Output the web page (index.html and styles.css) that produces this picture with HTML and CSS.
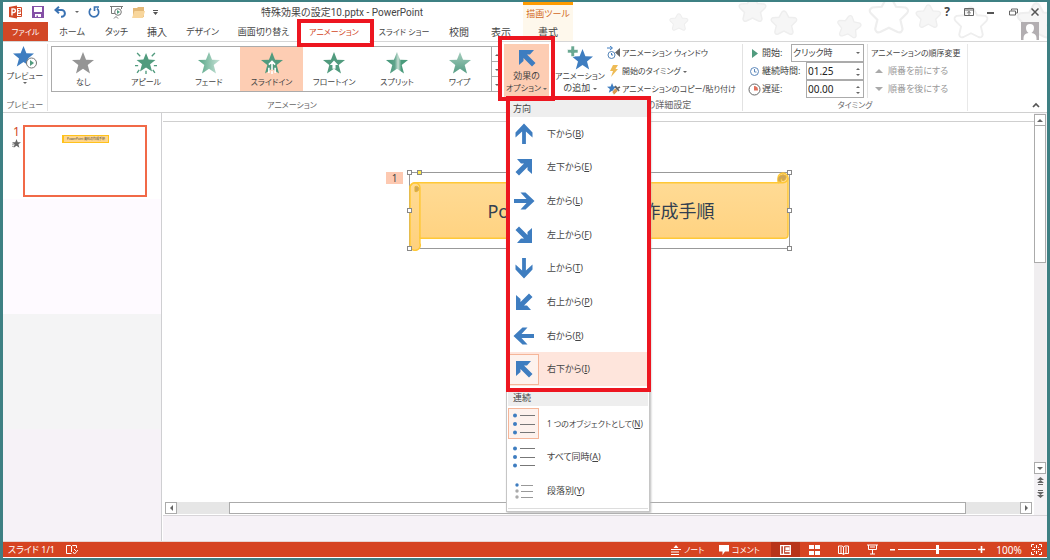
FILE: index.html
```html
<!DOCTYPE html>
<html lang="ja">
<head>
<meta charset="utf-8">
<title>特殊効果の設定10.pptx - PowerPoint</title>
<link rel="stylesheet" href="styles.css">
</head>
<body>
<svg class="defs" aria-hidden="true">
  <defs>
    <path id="star" d="M10.500 0L13.400 7.300L21 7.600L15 12.500L17.200 20.500L10.500 16L3.800 20.500L6 12.500L0 7.600L7.600 7.300Z"/>
    <path id="blob" d="M25 4Q29 0 33 4L39 15L52 16Q58 19 54 24L45 33L48 46Q47 52 41 50L29 44L17 50Q11 52 10 46L13 33L4 24Q0 19 6 16L19 15Z"/>
    <path id="arrow" d="M12 1.500L20.500 10.500V15.500L13.900 9.500V22H10.100V9.500L3.500 15.500V10.500Z"/>
    <path id="diag" d="M4 4H19L15 8.500H12L20.500 17L17 20.500L8.500 12V15L4 19Z"/>
    <linearGradient id="fade"><stop offset="0" stop-color="#55a585"/><stop offset="1" stop-color="#c9e3d8"/></linearGradient>
    <linearGradient id="split"><stop offset="0" stop-color="#3f9476"/><stop offset=".4" stop-color="#5fa48b"/><stop offset=".55" stop-color="#c5ddd3"/><stop offset=".7" stop-color="#4a9b7c"/><stop offset="1" stop-color="#4a9b7c"/></linearGradient>
    <linearGradient id="wipe" x2="0" y2="1"><stop offset="0" stop-color="#a5cdbd"/><stop offset="1" stop-color="#559d84"/></linearGradient>
    <linearGradient id="gold" x2="0" y2="1"><stop offset="0" stop-color="#ffdc98"/><stop offset="1" stop-color="#ffd17d"/></linearGradient>
  </defs>
</svg>
<div class="app">
  <header class="header">
    <svg class="stars" width="420" height="38" viewBox="0 0 420 38" fill="#f6f6f6" stroke="#eee" stroke-width="3">
      <use href="#blob" transform="translate(42 11) scale(.34)"/>
      <use href="#blob" transform="translate(111 -6) scale(.5)"/>
      <use href="#blob" transform="translate(143 8) scale(.48)"/>
      <use href="#blob" transform="translate(211 11) rotate(8) scale(.44)"/>
      <use href="#blob" transform="translate(241 -6) scale(.72)" fill="#fff"/>
      <use href="#blob" transform="translate(288 2) scale(.46)"/>
      <use href="#blob" transform="translate(326 4) scale(.62)" fill="#fff"/>
      <use href="#blob" transform="translate(389 0) scale(.7)"/>
    </svg>
    <div class="titlebar">
      <div class="qat">
        <span class="slot"><svg width="14" height="14" viewBox="0 0 14 14"><path fill="#fff" stroke="#d24726" d="M7 2.500h5.500v9H7z"/><path fill="#d24726" d="M0 2L8 .5v13L0 12z"/><path fill="none" stroke="#fff" stroke-width="1.400" d="M3 10.500V4h1.700a1.700 1.700 0 010 3.500H3"/><path fill="none" stroke="#d24726" d="M9 4.500h2v2.500H9M9 9.500h3"/></svg></span>
        <button class="slot" aria-label="保存"><svg width="12" height="12" viewBox="0 0 12 12"><path fill="#8450a6" d="M0 0h12v12H0z"/><path fill="#fff" d="M2 1h8v5H2zM3 8h6v3H6V9.500H4.500V11H3z"/></svg></button>
        <button class="slot" aria-label="元に戻す"><svg width="13" height="12" viewBox="0 0 13 12" fill="none" stroke="#3a72b3" stroke-width="2"><path d="M5 .8L1.500 4 5 7.200M2 4h5.500a3.200 3.200 0 010 6.800H7"/></svg></button>
        <button class="slot tiny" aria-label="元に戻すの一覧"><i class="caret"></i></button>
        <button class="slot" aria-label="やり直し"><svg width="12" height="12" viewBox="0 0 12 12" fill="none" stroke="#3a72b3" stroke-width="1.700"><path d="M3 2.500A4.700 4.700 0 109 2.500M6.500 5V1H11"/></svg></button>
        <button class="slot" aria-label="先頭から開始"><svg width="13" height="13" viewBox="0 0 13 13" fill="none" stroke="#777"><path d="M0 .5h13M1.500 1v6.500H5M11.500 1v2M4 12.500l2-2 2 2"/><circle cx="8" cy="6" r="3.300" fill="#fff"/><path fill="#519b7e" stroke="none" d="M7 4l3 2-3 2z"/></svg></button>
        <button class="slot" aria-label="開く"><svg width="13" height="11" viewBox="0 0 13 11"><path fill="#e3b877" d="M1 1h4l1-1h6v10H1z"/><path fill="#f8d69c" d="M2.500 4H13l-2 7H0z"/></svg></button>
        <button class="slot tiny" aria-label="カスタマイズ"><svg width="5" height="5" viewBox="0 0 5 5"><path fill="#555" d="M0 0h5v1H0zM0 2h5L2.500 5z"/></svg></button>
      </div>
      <h1 class="title">特殊効果の設定10.pptx - PowerPoint</h1>
      <div class="context-title">描画ツール</div>
      <div class="window-controls">
        <button class="help" aria-label="ヘルプ">?</button>
        <button aria-label="リボンの表示オプション"><svg width="10" height="8" viewBox="0 0 10 8" fill="none" stroke="#666"><path d="M.5.500h9v7h-9zM1 2h8M5 7V3.500M3.300 5L5 3.500 6.700 5"/></svg></button>
        <button aria-label="最小化"><svg width="8" height="8" viewBox="0 0 8 8"><path fill="#555" d="M0 4h7v2H0z"/></svg></button>
        <button aria-label="元のサイズに戻す"><svg width="9" height="8" viewBox="0 0 9 8" fill="none" stroke="#666"><path d="M2.500 2.500V1h6v4h-2M.5 3h6v4h-6z"/></svg></button>
        <button aria-label="閉じる"><svg width="8" height="8" viewBox="0 0 8 8" stroke="#555" stroke-width="1.500"><path d="M.5.500l7 7M7.500.500l-7 7"/></svg></button>
      </div>
    </div>
    <nav class="tabs">
      <button class="tab file">ファイル</button>
      <button class="tab home">ホーム</button>
      <button class="tab">タッチ</button>
      <button class="tab kanji">挿入</button>
      <button class="tab design">デザイン</button>
      <button class="tab wide switch">画面切り替え</button>
      <button class="tab wide active">アニメーション<span class="mark mark-tab"></span></button>
      <button class="tab wide">スライド ショー</button>
      <button class="tab kanji">校閲</button>
      <button class="tab kanji display">表示</button>
      <button class="tab kanji context">書式</button>
      <svg class="avatar" width="18" height="18" viewBox="0 0 18 18"><path fill="#b2aeb1" d="M0 0h18v18H0z"/><path fill="#fff" d="M9 2a4 4 0 014 4c0 2-1 4-2.500 5 3 .5 5 2 5 5v2h-13v-2c0-3 2-4.500 5-5C6 10 5 8 5 6a4 4 0 014-4z"/></svg>
    </nav>
  </header>

  <section class="ribbon">
    <div class="group preview">
      <button class="big"><svg width="26" height="26" viewBox="0 0 26 26"><use href="#star" fill="#3e7dc0" transform="translate(1 2)"/><circle cx="19.500" cy="19" r="5" fill="#fff" stroke="#777"/><path fill="#519b7e" d="M18 16l4 3-4 3z"/></svg><span>プレビュー</span><i class="caret"></i></button>
      <div class="group-name">プレビュー</div>
    </div>
    <div class="group animations">
      <div class="gallery">
        <button class="effect"><svg width="22" height="22" viewBox="0 0 21 21"><use href="#star" fill="#959595"/></svg>なし</button>
        <button class="effect"><svg width="22" height="22" viewBox="0 0 21 21"><use href="#star" fill="#519b7e" transform="translate(1.500 1) scale(.86)"/><path stroke="#519b7e" stroke-width="1.300" d="M2 1l3 3M19 1l-3 3M0 13h3M18 13h3M2 20l2-3M19 20l-2-3M10.500 18v3"/></svg>アピール</button>
        <button class="effect"><svg width="22" height="22" viewBox="0 0 21 21"><use href="#star" fill="url(#fade)"/></svg>フェード</button>
        <button class="effect selected"><svg width="22" height="22" viewBox="0 0 21 21"><use href="#star" fill="#519b7e"/><path fill="none" stroke="#fff" stroke-width="1.500" d="M10.500 9v8M7.500 12l3-3 3 3M7.500 15v5M13.500 15v5M10.500 18v3"/></svg>スライドイン</button>
        <button class="effect"><svg width="22" height="22" viewBox="0 0 21 21"><use href="#star" fill="#519b7e"/><path fill="#fff" d="M10.500 8l4 4.500H12V16H9v-3.500H6.500z"/></svg>フロートイン</button>
        <button class="effect"><svg width="22" height="22" viewBox="0 0 21 21"><use href="#star" fill="url(#split)"/></svg>スプリット</button>
        <button class="effect"><svg width="22" height="22" viewBox="0 0 21 21"><use href="#star" fill="url(#wipe)"/></svg>ワイプ</button>
        <div class="gallery-nav"><button aria-label="上へ"><i class="caret up"></i></button><button aria-label="下へ"><i class="caret"></i></button><button aria-label="その他"><i class="caret"></i></button></div>
      </div>
      <div class="group-name">アニメーション</div>
    </div>
    <div class="group advanced">
      <div class="advanced-row">
        <div class="options">
          <button class="big options-button"><svg width="24" height="24" viewBox="0 0 24 24" fill="#3e7dc0"><use href="#diag"/></svg><span class="kanji">効果の</span><span>オプション <i class="caret"></i></span></button>
          <span class="mark mark-options"></span>
          <div class="menu">
            <div class="menu-head">方向</div>
            <div class="menu-list directions">
              <button><span class="pic"><svg width="24" height="24" viewBox="0 0 24 24"><use href="#arrow"/></svg></span><span>下から(<u>B</u>)</span></button>
              <button><span class="pic"><svg width="24" height="24" viewBox="0 0 24 24"><use href="#diag" transform="rotate(90 12 12)"/></svg></span><span>左下から(<u>E</u>)</span></button>
              <button><span class="pic"><svg width="24" height="24" viewBox="0 0 24 24"><use href="#arrow" transform="rotate(90 12 12)"/></svg></span><span>左から(<u>L</u>)</span></button>
              <button><span class="pic"><svg width="24" height="24" viewBox="0 0 24 24"><use href="#diag" transform="rotate(180 12 12)"/></svg></span><span>左上から(<u>F</u>)</span></button>
              <button><span class="pic"><svg width="24" height="24" viewBox="0 0 24 24"><use href="#arrow" transform="rotate(180 12 12)"/></svg></span><span>上から(<u>T</u>)</span></button>
              <button><span class="pic"><svg width="24" height="24" viewBox="0 0 24 24"><use href="#diag" transform="rotate(270 12 12)"/></svg></span><span>右上から(<u>P</u>)</span></button>
              <button><span class="pic"><svg width="24" height="24" viewBox="0 0 24 24"><use href="#arrow" transform="rotate(270 12 12)"/></svg></span><span>右から(<u>R</u>)</span></button>
              <button class="current"><span class="pic boxed"><svg width="24" height="24" viewBox="0 0 24 24"><use href="#diag"/></svg></span><span>右下から(<u>I</u>)</span></button>
            </div>
            <div class="menu-head">連続</div>
            <div class="menu-list sequence">
              <button class="long"><span class="pic boxed"><svg width="22" height="22" viewBox="0 0 22 22"><path stroke="#777" d="M7 2.500h15M7 11.500h15M7 19.500h15"/><circle cx="2" cy="2.500" r="2"/><circle cx="2" cy="11" r="2"/><circle cx="2" cy="19.500" r="2"/></svg></span><span>1 つのオブジェクトとして(<u>N</u>)</span></button>
              <button><span class="pic"><svg width="22" height="22" viewBox="0 0 22 22"><path stroke="#777" d="M7 2.500h15M7 11.500h15M7 19.500h15"/><circle cx="2" cy="2.500" r="2"/><circle cx="2" cy="11" r="2"/><circle cx="2" cy="19.500" r="2"/></svg></span><span>すべて同時(<u>A</u>)</span></button>
              <button><span class="pic"><svg width="22" height="22" viewBox="0 0 22 22"><path stroke="#999" d="M8 5.500h12M8 11.500h12M8 17.500h12"/><circle cx="4" cy="5" r="1.700"/><g fill="#aaa"><circle cx="4" cy="11" r="1.700"/><circle cx="4" cy="17" r="1.700"/></g></svg></span><span>段落別(<u>Y</u>)</span></button>
            </div>
          </div>
          <span class="mark mark-menu"></span>
        </div>
        <button class="big add"><svg width="26" height="24" viewBox="0 0 26 24"><use href="#star" fill="#3e7dc0" transform="translate(5 3)"/><path fill="#6aa892" stroke="#fff" stroke-width=".6" d="M4 0h3.500v3.500H11V7H7.500v3.500H4V7H.5V3.500H4z"/></svg><span>アニメーション</span><span class="kanji">の追加 <i class="caret"></i></span></button>
        <div class="stack">
          <button><svg width="14" height="14" viewBox="0 0 14 14" fill="none" stroke="#3e7dc0"><path d="M0 2h5M3 0l2.500 2L3 4"/><circle cx="4.500" cy="9" r="3.500" stroke="#5585b8"/><path d="M4.500 7v2H6"/><path fill="#666" stroke="none" d="M13 2v9L8 6.500z"/></svg><span>アニメーション ウィンドウ</span></button>
          <button><svg width="14" height="14" viewBox="0 0 14 14"><path fill="#eebb55" d="M6 1h5L8.500 5H11L4 13l2-6H3z"/></svg><span>開始のタイミング <i class="caret"></i></span></button>
          <button><svg width="14" height="14" viewBox="0 0 14 14"><use href="#star" fill="#3e7dc0" transform="translate(0 1) scale(.48)"/><path fill="#d99a52" stroke="#fff" stroke-width=".6" d="M5 10l3-4 3 3-4 4z"/><path stroke="#666" stroke-width="1.800" d="M9 7l4-2M8 4l4 5"/></svg><span>アニメーションのコピー/貼り付け</span></button>
        </div>
      </div>
      <div class="group-name kanji">アニメーションの詳細設定</div>
    </div>
    <div class="group timing">
      <div class="timing-row">
        <div class="fields">
          <div class="field">
            <svg width="13" height="13" viewBox="0 0 13 13"><path fill="#519b7e" d="M4 2l6 4.500L4 11z"/></svg>
            <label for="start">開始:</label>
            <span class="combo"><select id="start"><option>クリック時</option></select><i class="caret"></i></span>
          </div>
          <div class="field">
            <svg width="13" height="13" viewBox="0 0 13 13" fill="none" stroke="#5c88bb"><circle cx="6.500" cy="6.500" r="4"/><path d="M6.500 4v3h2"/></svg>
            <label for="duration">継続時間:</label>
            <span class="spin"><input id="duration" type="text" value="01.25"><span class="steps"><button aria-label="増やす"><i class="caret up"></i></button><button aria-label="減らす"><i class="caret"></i></button></span></span>
          </div>
          <div class="field">
            <svg width="13" height="13" viewBox="0 0 13 13"><circle cx="6.500" cy="6.500" r="5.500" fill="#fff" stroke="#666"/><path fill="#e0715c" d="M6 6.500V3a4 4 0 014 4.500H6z"/></svg>
            <label for="delay">遅延:</label>
            <span class="spin"><input id="delay" type="text" value="00.00"><span class="steps"><button aria-label="増やす"><i class="caret up"></i></button><button aria-label="減らす"><i class="caret"></i></button></span></span>
          </div>
        </div>
        <div class="order">
          <div class="order-title">アニメーションの順序変更</div>
          <button disabled><i class="tri up"></i>順番を前にする</button>
          <button disabled><i class="tri"></i>順番を後にする</button>
        </div>
      </div>
      <div class="group-name">タイミング</div>
    </div>
    <button class="collapse" aria-label="リボンを折りたたむ"><svg width="8" height="6" viewBox="0 0 8 6" fill="none" stroke="#555" stroke-width="1.700"><path d="M1 5l3-3 3 3"/></svg></button>
  </section>

  <main class="main">
    <aside class="slides">
      <div class="slide-meta"><span>1</span><svg width="9" height="9" viewBox="0 0 21 21"><use href="#star" fill="#666"/><path stroke="#888" stroke-width="2" d="M0 12h6M0 17h5"/></svg></div>
      <div class="thumb"><div class="thumb-banner">PowerPoint 資料の作成手順</div></div>
    </aside>
    <section class="editor">
      <div class="stage">
        <div class="canvas">
          <span class="badge">1</span>
          <div class="shape">
            <svg class="scroll-shape" width="379" height="76" viewBox="0 0 382 78" preserveAspectRatio="none">
              <path fill="url(#gold)" stroke="#ffc836" stroke-width="1.500" d="M5 10H371V5a5 5 0 0110 0V63q0 4-4 4H10V72a5 5 0 01-10 4V15a5 5 0 015-5z"/>
              <path fill="none" stroke="#ffc836" stroke-width="1.500" d="M10 67V15a5 5 0 00-10 0M371 10h5a5 5 0 005-5"/>
              <path fill="#cda65c" stroke="#e7b535" d="M5 14a3 3 0 014 2 3 3 0 01-4 3zM371 8a5 5 0 018-5 4 4 0 01-3 5q-2-1-1-3-2 1-1 4z"/>
            </svg>
            <span class="shape-text">PowerPoint 資料の作成手順</span>
            <i class="handle tl"></i><i class="handle tr"></i><i class="handle ml"></i><i class="handle mr"></i><i class="handle bl"></i><i class="handle br"></i><i class="handle adjust"></i>
          </div>
        </div>
        <div class="hscroll"><button aria-label="左へ"><i class="side left"></i></button><span class="track lead"></span><span class="hthumb"></span><span class="track tail"></span><button aria-label="右へ"><i class="side"></i></button></div>
      </div>
      <div class="vscroll">
        <button aria-label="上へスクロール"><i class="tri dark up"></i></button><span class="vthumb"></span><span class="vtrack"></span><button aria-label="下へスクロール"><i class="tri dark"></i></button>
        <button class="plain" aria-label="前のスライド"><svg width="7" height="8" viewBox="0 0 7 8" fill="#666"><path d="M3.500 0L7 3H0zM3.500 3L7 6H0zM1 7h5v1H1z"/></svg></button>
        <button class="plain" aria-label="次のスライド"><svg width="7" height="8" viewBox="0 0 7 8" fill="#666"><path d="M1 0h5v1H1zM0 2h7L3.500 5zM0 5h7L3.500 8z"/></svg></button>
      </div>
      <div class="notes"></div>
    </section>
  </main>

  <footer class="status">
    <span class="page">スライド 1/1</span>
    <button class="proof" aria-label="スペルチェック"><svg width="12" height="11" viewBox="0 0 12 11" fill="none" stroke="#fff"><path d="M5.500 9.500H.5v-8h4l1 1 1-1h4V4M5.500 2v6M7 8l1.500 2L12 6M8 5l2 2"/></svg></button>
    <div class="status-right">
      <button class="with-text notes-button"><svg width="10" height="10" viewBox="0 0 10 10" fill="#fff"><path d="M5 0l2.500 3h-5zM0 4h10v1H0zM0 6.500h8v1H0zM0 9h8v1H0z"/></svg>ノート</button>
      <button class="with-text comment-button"><svg width="10" height="10" viewBox="0 0 10 10" fill="#fff"><path d="M0 0h10v6.500H6L3.500 10V6.500H0z"/></svg>コメント</button>
      <button class="view on" aria-label="標準"><svg width="11" height="10" viewBox="0 0 11 10" fill="none" stroke="#fff" stroke-width="1.300"><path d="M.7.700h9.600v8.600H.7zM3.500 1v8M5 6.500h5"/><path fill="#fff" d="M6 3h3v1.500H6z"/></svg></button>
      <button class="view" aria-label="スライド一覧"><svg width="11" height="10" viewBox="0 0 11 10" fill="#fff"><path d="M0 0h5v4H0zM6 0h5v4H6zM0 6h5v4H0zM6 6h5v4H6z"/></svg></button>
      <button class="view" aria-label="閲覧表示"><svg width="11" height="10" viewBox="0 0 11 10" fill="none" stroke="#fff"><path d="M5.500 2v7.500M.5 1H4l1.500 1L7 1h3.500v7.500H7l-1.500 1-1.500-1H.5zM2 3h2M2 5h2M2 7h2M7 3h2M7 5h2M7 7h2"/></svg></button>
      <button class="view" aria-label="スライド ショー"><svg width="11" height="11" viewBox="0 0 11 11" fill="none" stroke="#fff"><path d="M0 1h11M1.500 1v4.500h8V1M3 3h5M5.500 6v4M3 10h5"/></svg></button>
      <button class="zoom-step" aria-label="縮小"><svg width="5" height="5" viewBox="0 0 5 5" fill="#fff"><path d="M0 2h5v1.500H0z"/></svg></button>
      <input class="zoom" type="range" min="0" max="200" value="100" aria-label="ズーム">
      <button class="zoom-step" aria-label="拡大"><svg width="7" height="7" viewBox="0 0 7 7" fill="#fff"><path d="M0 2.700h2.700V0h1.600v2.700H7v1.600H4.300V7H2.700V4.300H0z"/></svg></button>
      <span class="percent">100%</span>
      <button class="fit" aria-label="ウィンドウに合わせる"><svg width="11" height="11" viewBox="0 0 11 11" fill="none" stroke="#fff"><path d="M.5 3V.500H3M8 .500h2.500V3M10.500 8v2.500H8M3 10.500H.5V8M5.500 1v3M5.500 7v3M1 5.500h3M7 5.500h3M3 3l1 1M8 3L7 4M3 8l1-1M8 8L7 7"/></svg></button>
    </div>
  </footer>
</div>
</body>
</html>
```
FILE: styles.css
```css
* {
  box-sizing: border-box;
}

body {
  margin: 0;
  padding: 2px 3px;
  height: 100vh;
  background: #3e8083;
  color: #444;
  font-family: "Noto Sans", "Noto Sans CJK JP", sans-serif;
  font-size: 10px;
  line-height: 12px;
  font-feature-settings: "palt";
  overflow: hidden;
}

button,
input,
select {
  margin: 0;
  padding: 0;
  border: 0;
  background: none;
  color: inherit;
  font: inherit;
  font-feature-settings: inherit;
  white-space: nowrap;
}

svg {
  flex: none;
  display: block;
}

.defs {
  position: absolute;
  width: 0;
  height: 0;
}

.app {
  display: flex;
  flex-direction: column;
  height: 100%;
  background: #fff;
}

.caret {
  display: inline-block;
  border: 2px solid transparent;
  border-top-color: #666;
  border-bottom: 0;
  vertical-align: middle;
}

.caret.up {
  border-top: 0;
  border-bottom: 2px solid #666;
}

.mark {
  position: absolute;
  z-index: 5;
  border: 4px solid #ed1620;
  pointer-events: none;
}

/* Header */
.header {
  position: relative;
  flex: none;
}

.stars {
  position: absolute;
  top: 0;
  right: 0;
  overflow: hidden;
}

.titlebar,
.tabs {
  position: relative;
  display: flex;
}

.titlebar {
  height: 20px;
}

.qat {
  display: flex;
  align-items: center;
  width: 258px;
  padding-left: 2px;
}

.slot {
  display: flex;
  justify-content: center;
  width: 22px;
}

.slot.tiny {
  width: 12px;
}

.title {
  width: 262px;
  margin: 0;
  font-family: Roboto, "Noto Sans CJK JP", sans-serif;
  font-size: 10px;
  font-weight: 400;
  line-height: 22px;
}

.context-title {
  width: 50px;
  border-top: 3px solid #ff9b00;
  background: #fef8ec;
  color: #d2691e;
  font-size: 9px;
  line-height: 17px;
  text-align: center;
}

.window-controls {
  display: flex;
  flex: 1;
  justify-content: flex-end;
  align-items: center;
  padding-right: 1px;
}

.window-controls button {
  display: flex;
  justify-content: center;
  width: 22px;
}

.window-controls .help {
  font-size: 12px;
  font-weight: 700;
}

.tabs {
  height: 20px;
  border-bottom: 1px solid #d6d6d6;
}

.tab {
  width: 41px;
  font-size: 9px;
  line-height: 18px;
}

.tab.kanji {
  width: 40px;
  font-size: 10px;
}

.tab.file {
  width: 45px;
  background: #d24726;
  color: #fff;
  font-size: 8px;
}

.tab.home {
  width: 48px;
}

.tab.design {
  width: 51px;
}

.tab.wide {
  width: 70px;
  font-size: 8px;
}

.tab.switch {
  width: 71px;
  font-size: 9px;
}

.tab.active {
  position: relative;
  margin-bottom: -1px;
  background: #fff;
  color: #d24726;
}

.tab.display {
  width: 44px;
}

.tab.context {
  width: 50px;
  background: #fef8ec;
}

.mark-tab {
  top: -3px;
  left: -2px;
  width: 77px;
  height: 28px;
}

.avatar {
  margin-left: auto;
  margin-right: 8px;
}

/* Ribbon */
.ribbon {
  display: flex;
  flex: none;
  height: 71px;
  padding: 2px 0 1px;
  border-bottom: 1px solid #d0d0d0;
  font-size: 8px;
}

.ribbon .kanji {
  font-size: 9px;
}

.group {
  display: flex;
  flex-direction: column;
  justify-content: space-between;
}

.group-name {
  text-align: center;
  color: #666;
}

.big {
  display: flex;
  flex-direction: column;
  align-items: center;
}

.preview {
  width: 45px;
  border-right: 1px solid #e2e2e2;
}

.gallery {
  display: flex;
  height: 46px;
  margin: 2px 0 0 3px;
  border: 1px solid #ababab;
}

.animations {
  width: 454px;
}

.animations .group-name {
  padding-left: 34px;
}

.effect {
  display: flex;
  flex: 1;
  flex-direction: column;
  align-items: center;
  justify-content: center;
  gap: 2px;
  padding-top: 2px;
}

.effect.selected {
  background: #fdcdb3;
}

.gallery-nav {
  display: grid;
  width: 10px;
  border-left: 1px solid #ababab;
}

.gallery-nav button {
  line-height: 8px;
}

.gallery-nav button + button {
  border-top: 1px solid #ababab;
}

.advanced {
  width: 241px;
  border-right: 1px solid #e2e2e2;
}

.advanced .group-name {
  padding-left: 38px;
}

.advanced-row,
.timing-row {
  display: flex;
}

.options {
  position: relative;
}

.options-button {
  width: 45px;
  height: 54px;
  margin-left: 2px;
  padding-top: 2px;
  background: #fdcdb3;
}

.mark-options {
  top: -8px;
  left: -4px;
  width: 57px;
  height: 65px;
}

.mark-menu {
  top: 52px;
  left: 4px;
  width: 145px;
  height: 296px;
}

.add {
  width: 58px;
  padding: 2px 0 0 4px;
}

.stack {
  display: grid;
  grid-auto-rows: 18px;
}

.stack button {
  display: flex;
  align-items: center;
  gap: 1px;
}

.timing {
  width: 225px;
  border-right: 1px solid #e8e8e8;
}

.fields {
  display: grid;
  grid-auto-rows: 18px;
  width: 125px;
  padding: 0 3px 0 5px;
  border-right: 1px solid #e2e2e2;
  font-size: 9px;
  white-space: nowrap;
}

.field {
  display: flex;
  align-items: center;
  gap: 1px;
}

.combo,
.spin {
  display: flex;
  align-items: center;
  height: 18px;
  margin-left: auto;
  border: 1px solid #ababab;
  background: #fff;
}

.combo {
  position: relative;
  width: 73px;
}

.combo select {
  width: 100%;
  padding-left: 1px;
  appearance: none;
}

.combo .caret {
  position: absolute;
  right: 3px;
  pointer-events: none;
}

.spin {
  width: 58px;
}

.spin input {
  flex: 1;
  min-width: 0;
  padding-left: 1px;
  color: #222;
  font-size: 10px;
}

.steps {
  display: grid;
  width: 11px;
}

.steps button {
  line-height: 6px;
}

.order {
  display: grid;
  grid-auto-rows: 18px;
  align-items: center;
  padding-left: 3px;
  white-space: nowrap;
}

.order button {
  display: flex;
  align-items: center;
  gap: 5px;
  padding-left: 4px;
  color: #999;
  font-size: 9px;
}

.tri {
  border: 4px solid transparent;
  border-top-color: #aaa;
  border-bottom: 0;
}

.tri.up {
  border-top: 0;
  border-bottom: 4px solid #aaa;
}

.tri.dark {
  border-width: 3px 3px 0;
  border-top-color: #666;
}

.tri.dark.up {
  border-width: 0 3px 3px;
  border-bottom-color: #666;
}

.collapse {
  align-self: flex-end;
  margin-left: auto;
  padding: 0 7px 3px 0;
}

/* Drop-down menu */
.menu {
  position: absolute;
  z-index: 4;
  top: 55px;
  left: 4px;
  width: 144px;
  padding: 0 1px 2px;
  border: 1px solid #c6c6c6;
  background: #fff;
  box-shadow: 1px 1px 2px #bbb;
  font-size: 9px;
}

.menu-head {
  padding-left: 5px;
  background: #eee;
  line-height: 17px;
}

.menu-list {
  display: grid;
  grid-auto-rows: 1fr;
}

.directions {
  height: 272px;
  padding-bottom: 3px;
}

.sequence {
  height: 103px;
  padding-top: 1px;
  border-bottom: 1px solid #ddd;
}

.menu-list button {
  display: flex;
  align-items: center;
  gap: 8px;
}

.menu-list .long {
  font-size: 8px;
}

.menu-list .current {
  background: #fee5dc;
}

.pic {
  display: flex;
  align-items: center;
  justify-content: center;
  width: 31px;
  height: 31px;
  fill: #3e7dc0;
}

.pic.boxed {
  border: 1px solid #f5b598;
  background: #fdf2ed;
}

/* Workspace */
.main {
  display: flex;
  flex: 1;
  min-height: 0;
}

.slides {
  display: flex;
  align-items: flex-start;
  gap: 2px;
  width: 159px;
  padding: 12px 0 0 9px;
  border-right: 1px solid #cfcfd2;
  background: linear-gradient(#fff 86px, #fefaff 86px 201px, #f4f4f5 201px 316px, #f6f2f7 316px);
}

.slide-meta {
  display: flex;
  flex-direction: column;
  align-items: center;
  width: 9px;
  color: #d24726;
  font-size: 12px;
  line-height: 14px;
}

.thumb {
  width: 124px;
  height: 72px;
  padding: 8px 36px 0 37px;
  border: 2px solid #f16947;
  background: #fff;
}

.thumb-banner {
  height: 8px;
  border: 1px solid #ffc21c;
  border-left-width: 2px;
  background: #ffd68c;
  font-size: 3px;
  line-height: 6px;
  text-align: center;
  white-space: nowrap;
}

.editor {
  display: grid;
  flex: 1;
  grid-template: 1fr 26px / 1fr 13px;
  margin-left: 1px;
}

.stage {
  display: flex;
  flex-direction: column;
  margin-top: 8px;
  border-top: 1px solid #cfcfcf;
}

.canvas {
  position: relative;
  flex: 1;
}

.badge {
  position: absolute;
  top: 50px;
  left: 223px;
  width: 17px;
  background: #fdc9b1;
  text-align: center;
}

.shape {
  position: absolute;
  top: 50px;
  left: 246px;
  display: flex;
  align-items: center;
  justify-content: center;
  width: 381px;
  height: 77px;
  border: 1px solid #999;
}

.scroll-shape {
  position: absolute;
  top: 0;
  left: 0;
  overflow: visible;
}

.shape-text {
  position: relative;
  padding-left: 3px;
  color: #333f50;
  font-size: 18px;
  line-height: 24px;
  white-space: nowrap;
}

.handle {
  position: absolute;
  width: 5px;
  height: 5px;
  border: 1px solid #888;
  background: #fff;
}

.tl,
.tr,
.adjust {
  top: -3px;
}

.ml,
.mr {
  top: 35px;
}

.bl,
.br {
  bottom: -3px;
}

.tl,
.ml,
.bl {
  left: -3px;
}

.tr,
.mr,
.br {
  right: -3px;
}

.adjust {
  left: 7px;
  background: #ffe94a;
}

.hscroll {
  display: flex;
  height: 13px;
  padding: 0 2px;
}

.hscroll button,
.vscroll button {
  display: flex;
  align-items: center;
  justify-content: center;
  flex: none;
  width: 12px;
  height: 12px;
  border: 1px solid #ababab;
  background: #fff;
}

.side {
  border: 3px solid transparent;
  border-left-color: #666;
  border-right: 0;
}

.side.left {
  border-left: 0;
  border-right: 3px solid #666;
}

.track {
  height: 12px;
  background: #e6e6e6;
}

.lead {
  width: 52px;
}

.tail {
  width: 54px;
}

.hthumb {
  flex: 1;
  height: 12px;
  border: 1px solid #ababab;
  background: #fff;
}

.vscroll {
  display: flex;
  flex-direction: column;
  padding: 1px 1px 15px 0;
  background: #f4f2f5;
}

.vthumb {
  height: 137px;
  border: 1px solid #ababab;
  border-top: 0;
  background: #fff;
}

.vtrack {
  flex: 1;
  background: #f0eef0;
}

.vscroll .plain {
  height: 13px;
  border: 0;
  background: none;
}

.notes {
  grid-column: 1 / -1;
  border-top: 1px solid #d8d5d9;
  background: #f6f2f7;
}

/* Status bar */
.status {
  display: flex;
  flex: none;
  align-items: center;
  height: 17px;
  border-top: 1px solid #e8d5d0;
  border-bottom: 1px solid #fff;
  background: #d64421;
  color: #fff;
}

.page {
  width: 63px;
  padding-left: 5px;
  font-size: 9px;
  white-space: nowrap;
}

.status-right {
  display: flex;
  flex: 1;
  align-items: center;
  justify-content: flex-end;
  padding-right: 5px;
}

.with-text {
  display: flex;
  align-items: center;
  gap: 3px;
  font-size: 8px;
}

.notes-button {
  width: 48px;
}

.comment-button {
  width: 52px;
}

.view {
  display: flex;
  align-items: center;
  justify-content: center;
  width: 29px;
  height: 15px;
}

.view.on {
  background: #b83419;
}

.zoom-step {
  display: flex;
  justify-content: center;
  width: 11px;
}

.zoom {
  width: 78px;
  height: 11px;
  margin: 0;
  appearance: none;
}

.zoom::-webkit-slider-runnable-track {
  height: 1px;
  background: #fff;
}

.zoom::-webkit-slider-thumb {
  width: 3px;
  height: 9px;
  margin-top: -4px;
  background: #fff;
  appearance: none;
}

.percent {
  width: 44px;
  text-align: center;
}
```
